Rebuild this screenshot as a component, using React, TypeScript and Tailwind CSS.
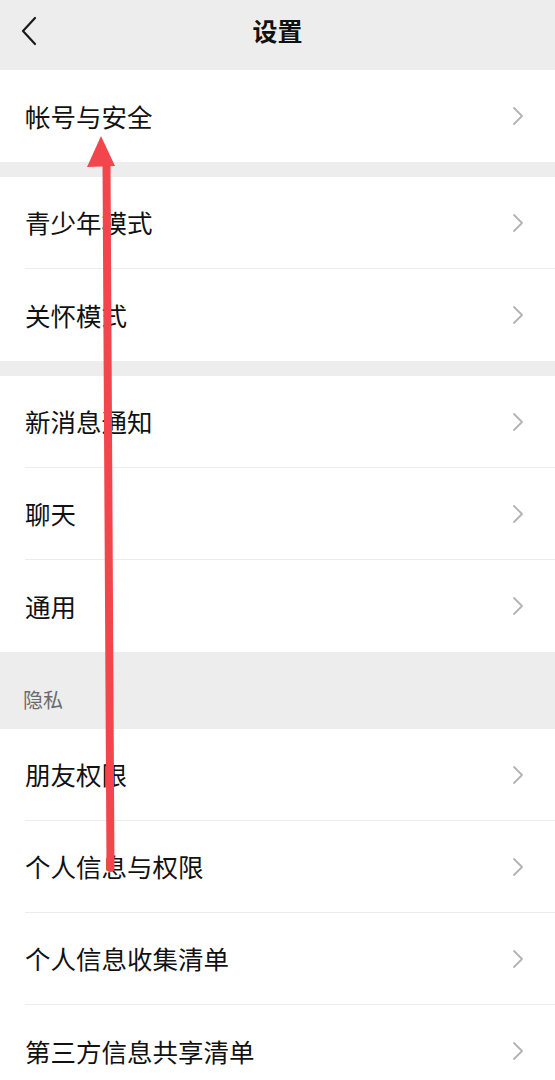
import React from 'react';

const Chevron: React.FC = () => (
  <svg width="14" height="22" viewBox="0 0 14 22" fill="none" className="shrink-0">
    <path d="M3 3l8 8-8 8" stroke="#b3b3b3" strokeWidth="1.8" strokeLinecap="round" strokeLinejoin="round" />
  </svg>
);

const Row: React.FC<{ label: string; last?: boolean }> = ({ label, last }) => (
  <div className="h-[92px] flex items-center bg-white pl-[25px]">
    <div className={`flex-1 h-full flex items-center pr-[30px] ${last ? '' : 'border-b border-[#ececec]'}`}>
      <span className="flex-1 text-[25.5px] text-[#111111]">{label}</span>
      <Chevron />
    </div>
  </div>
);

const Group: React.FC<{ items: string[] }> = ({ items }) => (
  <div className="flex flex-col">
    {items.map((t, i) => (
      <Row key={t} label={t} last={i === items.length - 1} />
    ))}
  </div>
);

const App: React.FC = () => {
  return (
    <div
      className="relative w-[555px] h-[1080px] overflow-hidden bg-[#ededed]"
      style={{ fontFamily: '"Noto Sans CJK SC", "Noto Sans", sans-serif' }}
    >
      {/* header */}
      <div className="h-[70px] flex items-center justify-center relative pb-[8px]">
        <svg width="18" height="30" viewBox="0 0 18 30" className="absolute left-[20px] top-[16px]">
          <path d="M15 2L3 15l12 13" stroke="#1a1a1a" strokeWidth="2.2" fill="none" strokeLinecap="round" strokeLinejoin="round" />
        </svg>
        <span className="text-[25px] font-bold text-[#111]">设置</span>
      </div>

      <Group items={['帐号与安全']} />
      <div className="h-[15px]" />
      <Group items={['青少年模式', '关怀模式']} />
      <div className="h-[15px]" />
      <Group items={['新消息通知', '聊天', '通用']} />

      <div className="h-[77px] flex items-center pl-[23px] pt-[18px]">
        <span className="text-[20px] text-[#6b6b6b]">隐私</span>
      </div>
      <Group items={['朋友权限', '个人信息与权限', '个人信息收集清单', '第三方信息共享清单']} />

      {/* annotation arrow */}
      <svg className="absolute left-0 top-0 pointer-events-none" width="555" height="1080" viewBox="0 0 555 1080">
        <path d="M106.5 163 L110.5 868" stroke="#f2454c" strokeWidth="8" strokeLinecap="round" fill="none" />
        <polygon points="101,136 87,167 115,166" fill="#f2454c" />
      </svg>
    </div>
  );
};

export default App;
